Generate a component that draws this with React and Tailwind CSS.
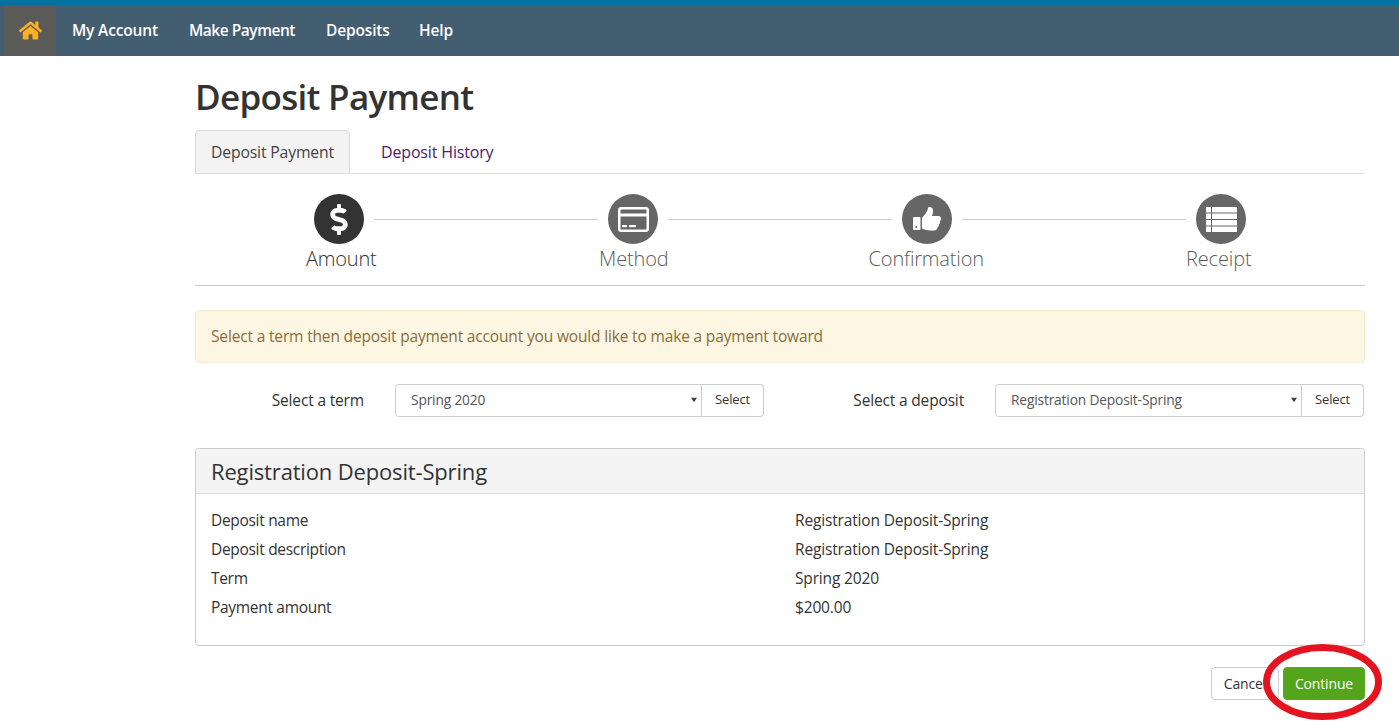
import React from "react";
import { FaHome, FaDollarSign } from "react-icons/fa";

function Step({ active, children }) {
  return (
    <div className={active ? "w-[50px] h-[50px] rounded-full bg-[#333333] text-white flex items-center justify-center shrink-0" : "w-[50px] h-[50px] rounded-full bg-[#666666] text-white flex items-center justify-center shrink-0"}>
      {children}
    </div>
  );
}

function Line() {
  return <div className="flex-1 h-px bg-[#cccccc] mx-[10px]" />;
}

function CardIcon() {
  return (
    <svg viewBox="0 0 31 25" className="w-[31px] h-[25px]" fill="none">
      <rect x="1.25" y="1.25" width="28.5" height="22.5" rx="2" stroke="#ffffff" strokeWidth="2.5" />
      <rect x="1" y="6.5" width="29" height="3" fill="#ffffff" />
      <rect x="4" y="18" width="5" height="2.2" fill="#ffffff" />
      <rect x="11" y="18" width="7" height="2.2" fill="#ffffff" />
    </svg>
  );
}

function ThumbIcon() {
  return (
    <svg viewBox="0 0 28 24" className="w-[28px] h-[24px]" fill="#ffffff">
      <rect x="0" y="10" width="7.5" height="13" rx="1" />
      <circle cx="3.2" cy="20" r="1" fill="#666666" />
      <path d="M9 11 L13 6 Q15 3 15 1 Q15 0 16.5 0 Q20 0 20 4 Q20 6 19 9 L25.5 9 Q28 9 28 11.5 Q28 13 27 14 Q27.5 16 26 17.5 Q26 19.5 24.5 20.5 Q24 23.5 21 23.5 L17 23.5 Q13 23.5 9 21.5 Z" />
    </svg>
  );
}

function ListIcon() {
  return (
    <svg viewBox="0 0 31 25" className="w-[31px] h-[25px]" fill="#ffffff">
      {[0, 6.5, 13, 19.5].map((y) => (
        <g key={y}>
          <rect x="0" y={y} width="5" height="5.5" />
          <rect x="6" y={y} width="25" height="5.5" />
        </g>
      ))}
    </svg>
  );
}

function Picker({ label, value }) {
  return (
    <div className="flex items-center h-[33px]">
      <div className="w-[200px] pt-[1px] text-[15.5px] text-[#333333] text-right pr-[31px] whitespace-nowrap">{label}</div>
      <div className="relative flex-1 h-full">
        <select defaultValue={value} className="w-full h-full appearance-none border border-[#cccccc] rounded-l-[4px] pl-[15px] text-[13.75px] text-[#555555] bg-white outline-none">
          <option>{value}</option>
        </select>
        <svg viewBox="0 0 8 6" className="absolute right-[5px] top-[13px] w-[6px] h-[6px]"><path d="M0 0h8L4 6z" fill="#444444" /></svg>
      </div>
      <button className="h-full w-[62px] border border-l-0 border-[#cccccc] rounded-r-[4px] text-[13px] text-[#333333] bg-white pb-[2px]">Select</button>
    </div>
  );
}

const rows = [
  ["Deposit name", "Registration Deposit-Spring"],
  ["Deposit description", "Registration Deposit-Spring"],
  ["Term", "Spring 2020"],
  ["Payment amount", "$200.00"],
];

export default function App() {
  return (
    <div className="relative w-[1399px] h-[724px] overflow-hidden bg-white font-['Open_Sans','Noto_Sans',sans-serif] tracking-[-0.01em]">
      <div className="h-[5px] bg-[#04739f]" />
      <nav className="h-[51px] bg-[#435d71] flex items-center pl-[4px]">
        <div className="w-[52px] h-full bg-[#5a5a58] flex items-center justify-center text-[#fdb022]">
          <FaHome className="w-[23px] h-[23px]" />
        </div>
        <div className="flex items-center text-white font-semibold text-[15.5px] ml-[16px]">
          <a className="w-[117px]">My Account</a>
          <a className="w-[137px] tracking-[-0.03em]">Make Payment</a>
          <a className="w-[93px]">Deposits</a>
          <a>Help</a>
        </div>
      </nav>

      <main className="ml-[195px] w-[1170px]">
        <h1 className="text-[35px] leading-[40px] font-semibold text-[#333333] mt-[21px] tracking-[-0.02em]">Deposit Payment</h1>

        <div className="flex mt-[13px] h-[44px] border-b border-[#dddddd]">
          <div className="h-[44px] w-[155px] pt-[1px] bg-[#f3f3f3] border border-[#dddddd] rounded-t-[4px] text-[15.75px] font-medium text-[#444444] flex items-center justify-center">Deposit Payment</div>
          <div className="ml-[31px] h-[44px] text-[16px] font-medium text-[#4b2168] flex items-center">Deposit History</div>
        </div>

        <div className="flex items-center mt-[20px] mx-[119px]">
          <Step active><FaDollarSign className="w-[18px] h-[31px]" /></Step>
          <Line />
          <Step><CardIcon /></Step>
          <Line />
          <Step><ThumbIcon /></Step>
          <Line />
          <Step><ListIcon /></Step>
        </div>
        <div className="grid grid-cols-4 text-center text-[20px] font-light leading-[28px] mt-[1px] mb-[12px]">
          <div className="text-[#333333]">Amount</div>
          <div className="text-[#5c5c5c]">Method</div>
          <div className="text-[#5c5c5c]">Confirmation</div>
          <div className="text-[#5c5c5c]">Receipt</div>
        </div>
        <div className="h-px bg-[#cccccc]" />

        <div className="mt-[24px] h-[53px] pt-[1px] bg-[#fcf6e3] border border-[#faebcc] rounded-[4px] flex items-center pl-[15px] text-[15.5px] text-[#8a6d3b]">
          Select a term then deposit payment account you would like to make a payment toward
        </div>

        <div className="grid grid-cols-2 gap-x-[31px] mt-[21px] pr-[1px]">
          <Picker label="Select a term" value="Spring 2020" />
          <Picker label="Select a deposit" value="Registration Deposit-Spring" />
        </div>

        <section className="mt-[31px] h-[198px] border border-[#cccccc] rounded-[4px] overflow-hidden">
          <div className="h-[45px] bg-[#f4f4f4] border-b border-[#dddddd] flex items-center pl-[15px] text-[22px] font-medium text-[#333333]">Registration Deposit-Spring</div>
          <div className="pt-[12px] pl-[15px]">
            {rows.map(([k, v]) => (
              <div key={k} className="grid grid-cols-[584px_1fr] h-[29px] leading-[29px] text-[15.5px] text-[#333333]">
                <div className="tracking-[-0.02em]">{k}</div>
                <div>{v}</div>
              </div>
            ))}
          </div>
        </section>

        <div className="flex justify-end gap-[4px] mt-[21px]">
          <button className="h-[33px] w-[68px] border border-[#cccccc] rounded-[4px] text-[14px] text-[#333333] bg-white">Cancel</button>
          <button className="h-[33px] w-[82px] border border-[#4cae2c] rounded-[4px] text-[14px] text-white bg-[#54a41c]">Continue</button>
        </div>
      </main>

      <svg className="absolute left-[1260px] top-[640px] w-[125px] h-[84px]" viewBox="0 0 125 84" fill="none">
        <ellipse cx="62.5" cy="42" rx="56" ry="34.5" stroke="#e5131f" strokeWidth="7" />
      </svg>
    </div>
  );
}
